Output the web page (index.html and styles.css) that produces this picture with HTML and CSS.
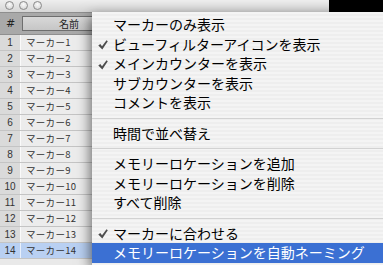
FILE: index.html
```html
<!DOCTYPE html>
<html lang="ja">
<head>
<meta charset="utf-8">
<link rel="stylesheet" href="styles.css">
</head>
<body>
<div class="window">
  <div class="titlebar">
    <span class="light"></span><span class="light"></span><span class="light"></span>
  </div>
  <div class="header">
    <div class="hash">#</div>
    <div class="namebtn">名前</div>
  </div>
  <div class="rows">
    <div class="row"><div class="num">1</div><div class="name">マーカー1</div></div>
    <div class="row"><div class="num">2</div><div class="name">マーカー2</div></div>
    <div class="row"><div class="num">3</div><div class="name">マーカー3</div></div>
    <div class="row"><div class="num">4</div><div class="name">マーカー4</div></div>
    <div class="row"><div class="num">5</div><div class="name">マーカー5</div></div>
    <div class="row"><div class="num">6</div><div class="name">マーカー6</div></div>
    <div class="row"><div class="num">7</div><div class="name">マーカー7</div></div>
    <div class="row"><div class="num">8</div><div class="name">マーカー8</div></div>
    <div class="row"><div class="num">9</div><div class="name">マーカー9</div></div>
    <div class="row"><div class="num">10</div><div class="name">マーカー10</div></div>
    <div class="row"><div class="num">11</div><div class="name">マーカー11</div></div>
    <div class="row"><div class="num">12</div><div class="name">マーカー12</div></div>
    <div class="row"><div class="num">13</div><div class="name">マーカー13</div></div>
    <div class="row selected"><div class="num">14</div><div class="name">マーカー14</div></div>
  </div>
</div>
<div class="menu">
  <div class="item">マーカーのみ表示</div>
  <div class="item checked"><svg class="check" viewBox="0 0 10 10"><path d="M0.3 5.4 L2.3 3.9 L4 6.3 L8.5 0.2 L9.8 1.2 L4.3 9.6 Z"/></svg>ビューフィルターアイコンを表示</div>
  <div class="item checked"><svg class="check" viewBox="0 0 10 10"><path d="M0.3 5.4 L2.3 3.9 L4 6.3 L8.5 0.2 L9.8 1.2 L4.3 9.6 Z"/></svg>メインカウンターを表示</div>
  <div class="item">サブカウンターを表示</div>
  <div class="item">コメントを表示</div>
  <div class="sep"></div>
  <div class="item">時間で並べ替え</div>
  <div class="sep"></div>
  <div class="item">メモリーロケーションを追加</div>
  <div class="item">メモリーロケーションを削除</div>
  <div class="item">すべて削除</div>
  <div class="sep"></div>
  <div class="item checked"><svg class="check" viewBox="0 0 10 10"><path d="M0.3 5.4 L2.3 3.9 L4 6.3 L8.5 0.2 L9.8 1.2 L4.3 9.6 Z"/></svg>マーカーに合わせる</div>
  <div class="item active">メモリーロケーションを自動ネーミング</div>
</div>
</body>
</html>
```
FILE: styles.css
```css
html, body {
  margin: 0;
  padding: 0;
  width: 383px;
  height: 265px;
  overflow: hidden;
  background: #000;
  font-family: "Noto Sans CJK JP", "Noto Sans", sans-serif;
}

.window {
  width: 329px;
  height: 265px;
  background: #e9e9e9;
  display: flex;
  flex-direction: column;
  overflow: hidden;
}

.titlebar {
  flex: none;
  height: 11px;
  background: linear-gradient(#eeeeee, #d6d6d6);
  border-bottom: 1px solid #8e8e8e;
  display: flex;
  align-items: flex-start;
  gap: 5px;
  padding: 1px 0 0 5px;
}

.light {
  width: 7px;
  height: 7px;
  border-radius: 50%;
  background: radial-gradient(circle at 50% 35%, #fafafa, #cfcfcf);
  border: 1px solid #8a8a8a;
}

.header {
  flex: none;
  height: 22px;
  background: #a9a9a9;
  display: flex;
  align-items: center;
  border-bottom: 1px solid #8f8f8f;
  box-sizing: border-box;
}

.hash {
  width: 21px;
  text-align: center;
  font-size: 11px;
  color: #222;
  font-family: "DejaVu Sans", sans-serif;
}

.namebtn {
  width: 94px;
  height: 15px;
  margin-left: 1px;
  box-sizing: border-box;
  border: 1px solid #6e6e6e;
  background: linear-gradient(#d8d8d8, #c6c6c6);
  font-size: 10px;
  line-height: 13px;
  text-align: center;
  color: #222;
}

.rows {
  display: flex;
  flex-direction: column;
}

.row {
  flex: none;
  height: 16px;
  display: flex;
  border-bottom: 1px solid #c4c4c4;
  box-sizing: border-box;
}

.num {
  width: 21px;
  background: #dadada;
  border-right: 1px solid #fafafa;
  box-sizing: border-box;
  text-align: center;
  font-size: 10px;
  line-height: 15px;
  color: #333;
  font-family: "Liberation Sans", sans-serif;
}

.name {
  width: 95px;
  background: #ececec;
  padding-left: 5px;
  font-size: 9.5px;
  line-height: 15px;
  color: #333;
  letter-spacing: 0.3px;
}

.row.selected .num,
.row.selected .name {
  background: #b9d0f2;
}

.row.selected .num {
  border-right-color: #e8f0fc;
}

.menu {
  position: absolute;
  left: 92px;
  top: 12px;
  width: 291px;
  height: 253px;
  padding-top: 3px;
  box-sizing: border-box;
  background: repeating-linear-gradient(#f4f4f4 0 2px, #eeeeee 2px 4px);
  box-shadow: -2px 4px 12px rgba(0, 0, 0, 0.55);
  display: flex;
  flex-direction: column;
}

.item {
  height: 19.5px;
  flex: none;
  position: relative;
  padding-left: 21px;
  font-size: 14px;
  line-height: 19.5px;
  color: #000;
  white-space: nowrap;
}

.item.active {
  background: #3b70d3;
  color: #fff;
}

.check {
  position: absolute;
  left: 6px;
  top: 5.5px;
  width: 10px;
  height: 10px;
  fill: #4d4d4d;
}

.sep {
  height: 11px;
  flex: none;
  display: flex;
  align-items: center;
}

.sep::before {
  content: "";
  flex: 1;
  height: 1px;
  background: #d2d2d2;
}
```
